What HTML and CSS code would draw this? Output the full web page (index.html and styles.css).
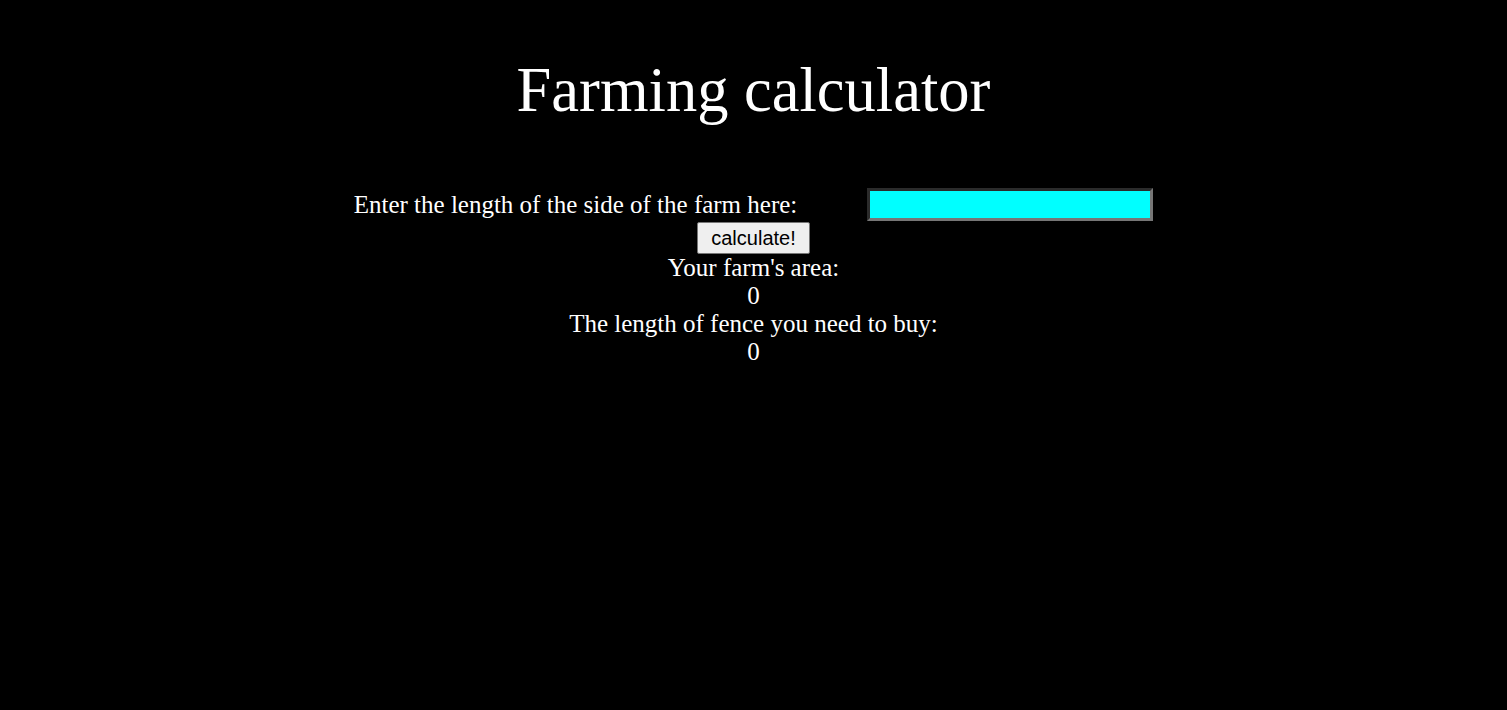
FILE: index.html
```html
<!DOCTYPE html>
<html>
<head>
<meta charset="utf-8">
<link rel="stylesheet" href="styles.css">
</head>
<body>
<h1 class="title">Farming calculator</h1>
<div class="calc">
  <div class="row">
    <label class="label" for="side">Enter the length of the side of the farm here:</label>
    <input class="field" id="side" type="text">
  </div>
  <button class="btn">calculate!</button>
  <div class="out">Your farm's area:</div>
  <div class="out">0</div>
  <div class="out">The length of fence you need to buy:</div>
  <div class="out">0</div>
</div>
</body>
</html>
```

FILE: styles.css
```css
html, body {
  margin: 0;
  background: #000;
  color: #fff;
  font-family: "Liberation Serif", "Times New Roman", serif;
}
body {
  padding: 8px;
}
.title {
  margin: 45px 0 0;
  text-align: center;
  font-weight: normal;
  font-size: 62.5px;
  line-height: 74px;
}
.calc {
  margin-top: 61px;
  display: flex;
  flex-direction: column;
  align-items: center;
  font-size: 25px;
}
.row {
  display: flex;
  align-items: center;
  gap: 70px;
}
.label {
  line-height: 28px;
}
.field {
  box-sizing: border-box;
  width: 286px;
  height: 33px;
  margin: 0;
  padding: 0;
  background: #00ffff;
  border-width: 3px;
  border-style: solid;
  border-color: #2b2b2b #767676 #767676 #2b2b2b;
}
.btn {
  box-sizing: border-box;
  margin-top: 1px;
  height: 32px;
  padding: 0 13px;
  font-family: "Liberation Sans", Arial, sans-serif;
  font-size: 20px;
  color: #000;
  background: #efefef;
  border: 1px solid #767676;
  border-radius: 2px;
}
.out {
  line-height: 28px;
}
```
